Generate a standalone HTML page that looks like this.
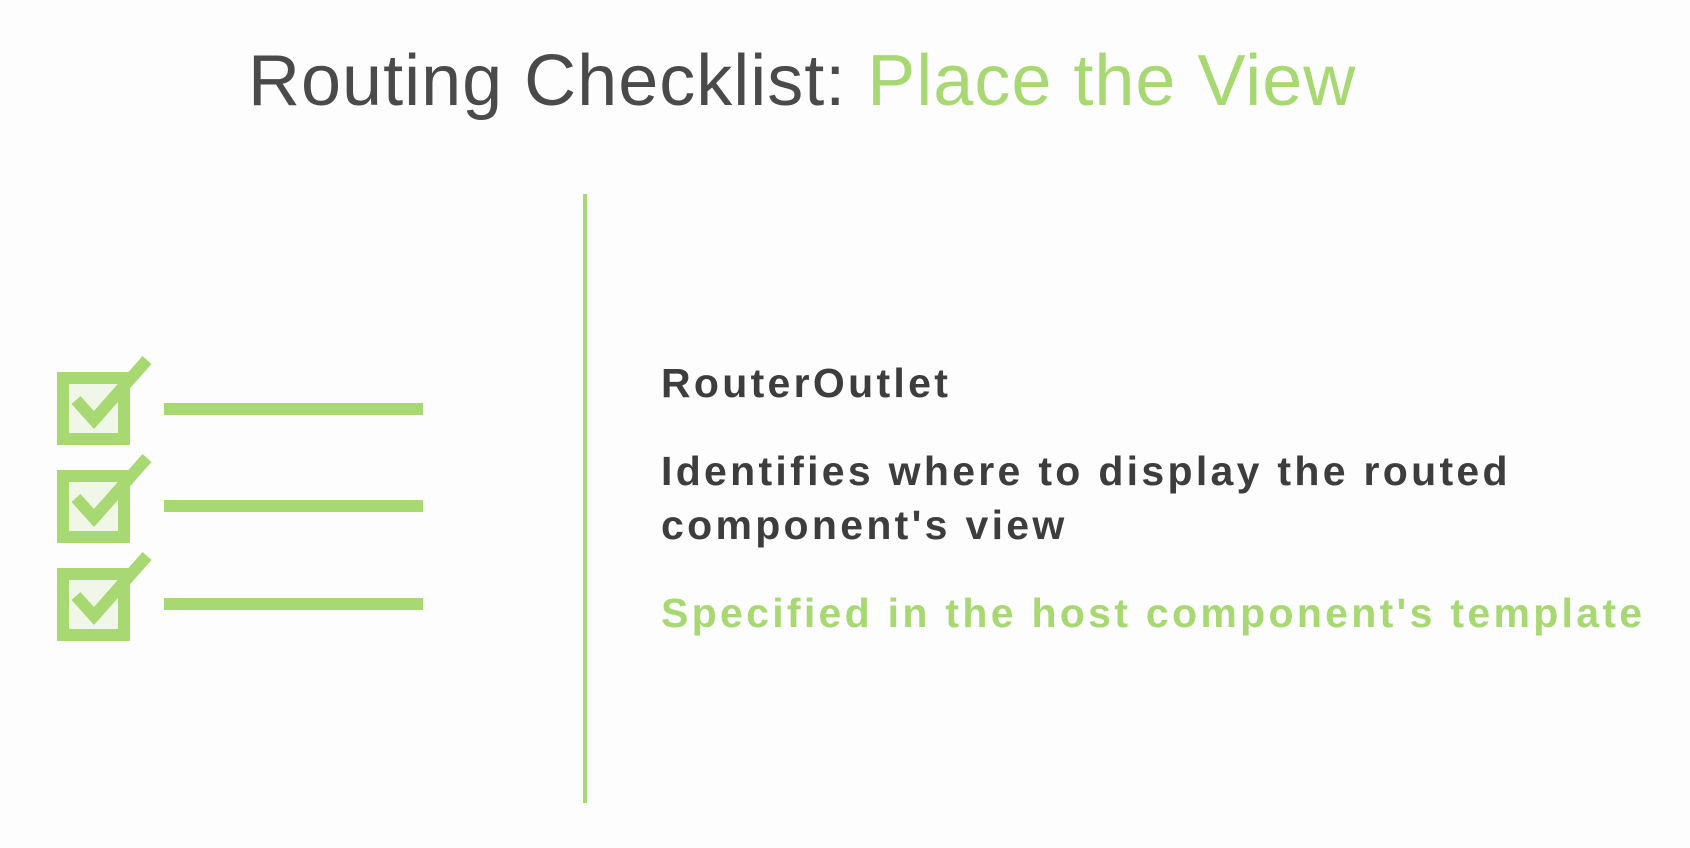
<!DOCTYPE html>
<html><head><style>
html,body{margin:0;padding:0;background:#fdfdfd;}
body{width:1690px;height:848px;position:relative;overflow:hidden;font-family:"Liberation Sans",sans-serif;}
.title{position:absolute;left:248px;top:40px;font-size:72px;color:#4a4a4a;white-space:nowrap;font-weight:300;letter-spacing:1px;}
.title span{color:#a8d872;}
.vline{position:absolute;left:583px;top:194px;width:4px;height:609px;background:#a8d872;}
.t{position:absolute;left:661px;font-size:41px;font-weight:bold;color:#3d3d3d;white-space:nowrap;letter-spacing:3.3px;}
</style></head><body>
<div class="title">Routing Checklist: <span>Place the View</span></div>
<svg style="position:absolute;left:0;top:0" width="600" height="848">
<g fill="#f1f7e8" stroke="#a8d872" stroke-width="12">
<rect x="63" y="378" width="61" height="61"/>
<rect x="63" y="476" width="61" height="61"/>
<rect x="63" y="574" width="61" height="61"/>
</g>
<g fill="none" stroke="#a8d872" stroke-width="12">
<path d="M76 400 L94 420 L147 360"/>
<path d="M76 498 L94 518 L147 458"/>
<path d="M76 596 L94 616 L147 556"/>
<path d="M164 409 H423 M164 506 H423 M164 604 H423"/>
</g>
</svg>
<div class="vline"></div>
<div class="t" style="top:360px">RouterOutlet</div>
<div class="t" style="top:448px">Identifies where to display the routed</div>
<div class="t" style="top:502px">component's view</div>
<div class="t" style="top:590px;color:#a8d872">Specified in the host component's template</div>
</body></html>
